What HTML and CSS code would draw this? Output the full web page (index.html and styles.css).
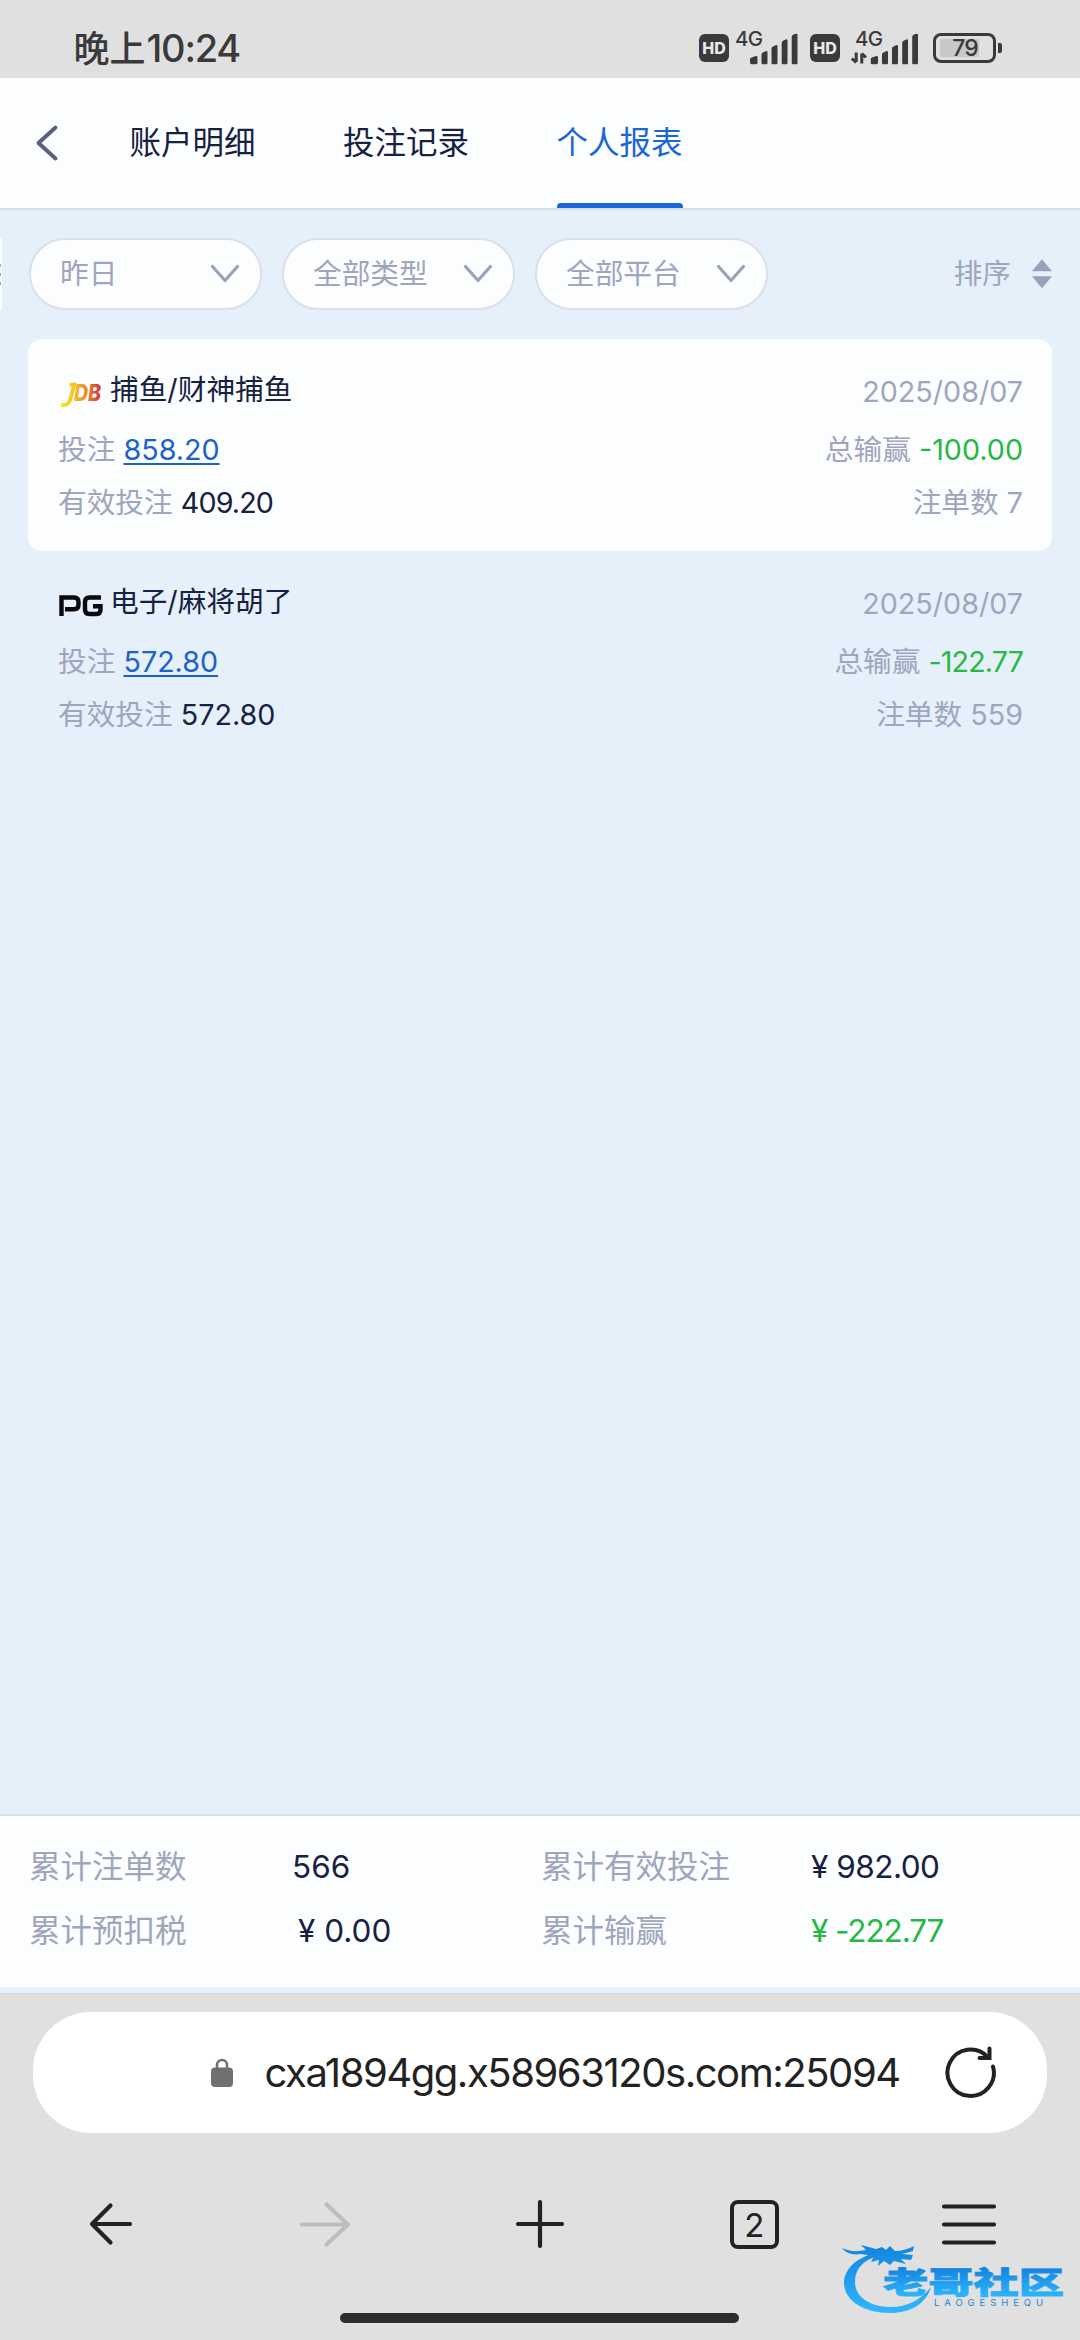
FILE: index.html
```html
<!DOCTYPE html>
<html lang="zh-CN">
<head>
<meta charset="utf-8">
<title>个人报表</title>
<link rel="stylesheet" href="styles.css">
</head>
<body>
<svg class="defs" width="0" height="0">
  <defs>
    <symbol id="bars" viewBox="0 0 48 31">
      <path d="M0 28.5V26Q0 24.500 1.500 24L5 22.700Q7.500 22 7.500 24V29Q7.500 31 5.500 31H2Q0 31 0 28.500ZM11.500 21Q11.500 19.500 13 19L15.500 17.700Q17.500 17 17.500 19V29.500Q17.500 31 16 31H13Q11.500 31 11.500 29.500ZM21.500 15Q21.500 13.500 23 13L25.500 11.700Q27.500 11 27.500 13V29.500Q27.500 31 26 31H23Q21.500 31 21.500 29.500ZM31.700 9.500Q31.700 8 33 7.300L35.700 6Q37.500 5.300 37.500 7V29.500Q37.500 31 36 31H33Q31.700 31 31.700 29.500ZM41.700 3.500Q41.700 2 43 1.300L45.700 .2Q47.500 -.3 47.500 1.500V29.500Q47.500 31 46 31H43Q41.700 31 41.700 29.500Z"/>
    </symbol>
    <symbol id="chevron" viewBox="0 0 30 20">
      <path d="M2.500 2.500L15 16.500L27.500 2.500" fill="none" stroke="#9aa1b8" stroke-width="3.200" stroke-linecap="round" stroke-linejoin="round"/>
    </symbol>
  </defs>
</svg>
<div class="screen">
  <div class="status">
    <div class="clock">晚上<span class="clock-num">10:24</span></div>
    <div class="status-icons">
      <div class="hd">HD</div>
      <svg class="signal" width="64" height="36" viewBox="0 0 64 36"><text x="0" y="17" class="net">4G</text><use href="#bars" x="15" y="4.500" width="48" height="31"/></svg>
      <div class="hd hd-second">HD</div>
      <svg class="signal signal-second" width="68" height="36" viewBox="0 0 68 36"><text x="4" y="17" class="net">4G</text><use href="#bars" x="19.500" y="4.500" width="48" height="31"/><path d="M5.200 23.500V33M5.200 33.500L.8 29.500M10.800 34.500V24.500M10.800 24.500L15 28.500" fill="none" stroke="#3a3a3a" stroke-width="3"/></svg>
      <div class="battery"><div class="battery-fill"></div><span class="battery-text">79</span></div>
      <div class="battery-nub"></div>
    </div>
  </div>

  <div class="header">
    <svg class="back" width="24" height="38" viewBox="0 0 24 38"><path d="M20.500 3.500L3.500 19L20.500 34.500" fill="none" stroke="#59627d" stroke-width="4" stroke-linecap="round" stroke-linejoin="round"/></svg>
    <div class="tabs">
      <div class="tab">账户明细</div>
      <div class="tab">投注记录</div>
      <div class="tab tab-active">个人报表</div>
    </div>
  </div>

  <div class="content">
    <div class="filters">
      <div class="edge"><i></i><i></i><i></i></div>
      <div class="pill"><span>昨日</span><svg width="30" height="20"><use href="#chevron"/></svg></div>
      <div class="pill"><span>全部类型</span><svg width="30" height="20"><use href="#chevron"/></svg></div>
      <div class="pill"><span>全部平台</span><svg width="30" height="20"><use href="#chevron"/></svg></div>
      <div class="sort"><span>排序</span><svg width="20" height="30" viewBox="0 0 20 30"><path d="M0 12.300L10 .3L20 12.300ZM0 17.300H20L10 29.300Z" fill="#98a1bb"/></svg></div>
    </div>

    <div class="card card-white">
      <div class="row row-title">
        <div class="game">
          <svg class="logo" width="48" height="30" viewBox="0 0 48 30">
            <defs><linearGradient id="jdb" gradientUnits="userSpaceOnUse" x1="4" y1="0" x2="43" y2="0"><stop offset="0" stop-color="#f8e52c"/><stop offset=".3" stop-color="#f3c327"/><stop offset=".65" stop-color="#e98626"/><stop offset="1" stop-color="#d0323a"/></linearGradient></defs>
            <path d="M11.500 5.700H16.200L12 21Q10.500 26 5.500 26H3" fill="none" stroke="url(#jdb)" stroke-width="3.800"/>
            <text x="16" y="21.500" class="jdb" textLength="27" lengthAdjust="spacingAndGlyphs">DB</text>
          </svg><span>捕鱼/财神捕鱼</span>
        </div>
        <span class="date">2025/08/07</span>
      </div>
      <div class="row row-bet">
        <div>投注 <a class="amount">858.20</a></div>
        <div>总输赢 <span class="loss">-100.00</span></div>
      </div>
      <div class="row row-valid">
        <div>有效投注 <span class="dark tight">409.20</span></div>
        <div>注单数 7</div>
      </div>
    </div>

    <div class="card">
      <div class="row row-title">
        <div class="game">
          <svg class="logo" width="48" height="30" viewBox="0 0 48 30"><path d="M3.500 25V6.500H16Q20.500 6.500 20.500 11V13.500Q20.500 18.200 16 18.200H7M43 6.500H31.500Q27 6.500 27 11V18.500Q27 23 31.500 23H38.500Q42.500 23 42.500 18.500V15.300H35" fill="none" stroke="#090a0e" stroke-width="4.400"/></svg><span>电子/麻将胡了</span>
        </div>
        <span class="date">2025/08/07</span>
      </div>
      <div class="row row-bet">
        <div>投注 <a class="amount">572.80</a></div>
        <div>总输赢 <span class="loss tight">-122.77</span></div>
      </div>
      <div class="row row-valid">
        <div>有效投注 <span class="dark">572.80</span></div>
        <div>注单数 559</div>
      </div>
    </div>
  </div>

  <div class="summary">
    <div>累计注单数</div><div class="dark">566</div>
    <div>累计有效投注</div><div class="dark yen">¥ 982.00</div>
    <div>累计预扣税</div><div class="dark indent">¥ 0.00</div>
    <div>累计输赢</div><div class="loss yen tight">¥ -222.77</div>
  </div>

  <div class="browser">
    <div class="urlbar">
      <svg class="lock" width="24" height="30" viewBox="0 0 24 30"><path d="M7 11V7A5 5 0 0 1 17 7V11" fill="none" stroke="#707070" stroke-width="2.500"/><rect x="1" y="9.500" width="22" height="19.500" rx="4" fill="#707070"/></svg>
      <span class="url">cxa1894gg.x58963120s.com:25094</span>
      <svg class="reload" width="54" height="54" viewBox="0 0 54 54"><path d="M50 22.500A23.200 23.200 0 1 1 44.500 12.800" fill="none" stroke="#222" stroke-width="4" stroke-linecap="round"/><path d="M46.500 4.500V14H36.500" fill="none" stroke="#222" stroke-width="4" stroke-linecap="round"/></svg>
    </div>
    <div class="nav">
      <svg width="56" height="56" viewBox="0 0 56 56" fill="none" stroke="#222" stroke-width="4.200" stroke-linecap="round" stroke-linejoin="round"><path d="M28.500 9.500L10 28L28.500 46.500M11 28H48"/></svg>
      <svg width="56" height="56" viewBox="0 0 56 56" fill="none" stroke="#bdbdbd" stroke-width="4.200" stroke-linecap="round" stroke-linejoin="round"><path d="M29.500 8.500L51 28.500L29.500 48.500M5 28.500H50"/></svg>
      <svg width="56" height="56" viewBox="0 0 56 56" fill="none" stroke="#222" stroke-width="4.200" stroke-linecap="round"><path d="M28 6V50M6 28H50"/></svg>
      <div class="tabcount">2</div>
      <svg width="56" height="56" viewBox="0 0 56 56" fill="none" stroke="#222" stroke-width="4.200" stroke-linecap="round"><path d="M3 10.500H53M3 28.500H53M3 46.500H53"/></svg>
    </div>
    <div class="handle"></div>
  </div>

  <svg class="watermark" width="240" height="84" viewBox="0 0 240 84">
    <defs><linearGradient id="wm" gradientUnits="userSpaceOnUse" x1="0" y1="8" x2="0" y2="76"><stop offset="0" stop-color="#1183dc"/><stop offset="1" stop-color="#2fb6ff"/></linearGradient>
    <linearGradient id="wt" gradientUnits="userSpaceOnUse" x1="0" y1="28" x2="0" y2="58"><stop offset="0" stop-color="#0f7ddd"/><stop offset="1" stop-color="#29b2fa"/></linearGradient></defs>
    <g fill="url(#wm)">
      <path d="M36 17C17 21 4 33 4 47C4 64 23 77 50 77C70 77 86 68 91 51C81 64 67 71 51 71C30 71 15 61 15 46C15 33 23 24 38 20Z"/>
      <path d="M2 12Q12 17 26 14L21 9L36 13L42 11L46 14L50 10L55 15Q65 15 74 10L73 15L62 18L73 19L71 24L61 23L66 28L54 25L50 29L44 25L38 30L39 24L31 26L34 20L21 18Q8 20 2 12Z"/>
    </g>
    <text x="43" y="57" class="wm-name" textLength="181" lengthAdjust="spacingAndGlyphs">老哥社区</text>
    <text x="94" y="69.500" class="wm-latin" textLength="109">LAOGESHEQU</text>
  </svg>
</div>
</body>
</html>
```
FILE: styles.css
```css
* { box-sizing: border-box; }
body { margin: 0; font-family: Inter, "Noto Sans CJK SC", sans-serif; }
.defs { position: absolute; }
.screen {
  position: relative;
  width: 1080px;
  height: 2340px;
  overflow: hidden;
  display: flex;
  flex-direction: column;
  background: #e6f0fb;
}

/* status bar */
.status {
  height: 78px;
  flex: none;
  background: #e0e0e0;
  display: flex;
  justify-content: space-between;
  padding: 0 78px 0 73.500px;
  color: #3a3a3a;
}
.clock { font-size: 36px; font-weight: 500; line-height: 50px; padding-top: 22.500px; white-space: nowrap; }
.clock-num { font-size: 38px; letter-spacing: -1.2px; margin-left: 1px; }
.status-icons { display: flex; align-items: flex-start; padding-top: 33px; }
.hd {
  width: 30px;
  height: 28px;
  margin-top: 1px;
  border-radius: 6px;
  background: #3a3a3a;
  color: #e8e8e8;
  font-size: 16px;
  font-weight: 800;
  line-height: 28px;
  text-align: center;
}
.signal { margin: -4px 0 0 6px; fill: #3a3a3a; overflow: visible; }
.net { font-size: 20.500px; font-weight: 450; letter-spacing: -.8px; fill: #3a3a3a; }
.hd-second { margin-left: 11px; }
.signal-second { margin-left: 11px; }
.battery {
  position: relative;
  width: 63px;
  height: 30px;
  margin-left: 14px;
  border: 3px solid #3a3a3a;
  border-radius: 8px;
  text-align: center;
}
.battery-fill { position: absolute; left: 4px; top: 3px; width: 39px; height: 18px; background: #c8c8c8; border-radius: 2px; }
.battery-text { position: relative; display: block; margin-left: 1px; font-size: 23px; font-weight: 500; line-height: 24px; letter-spacing: -1px; }
.battery-nub { width: 4px; height: 10px; margin: 10px 0 0 2px; background: #3a3a3a; border-radius: 0 2px 2px 0; }

/* header */
.header {
  height: 132px;
  flex: none;
  background: #fcfdff;
  border-bottom: 2px solid #d7deeb;
  display: flex;
  align-items: flex-start;
  padding-left: 35px;
}
.back { margin-top: 46px; flex: none; }
.tabs { display: flex; gap: 87.500px; margin-left: 70.500px; }
.tab {
  height: 130px;
  line-height: 129px;
  font-size: 31.500px;
  color: #16223f;
  position: relative;
  white-space: nowrap;
}
.tab-active { color: #1a66d2; }
.tab-active::after {
  content: "";
  position: absolute;
  left: 0;
  right: 0;
  bottom: 0;
  height: 5px;
  background: #1a66dd;
  border-radius: 4px 4px 0 0;
}

/* filters */
.content { flex: 1; padding: 28px 28px 0; color: #9ea6bd; font-size: 28.700px; }
.filters { position: relative; display: flex; gap: 20px; margin-left: 1px; height: 72px; }
.edge { position: absolute; left: -29px; top: 0; width: 2px; height: 72px; background: #fcfdff; padding-top: 26px; }
.edge i { display: block; width: 1px; height: 3px; background: #9ea6bd; margin-bottom: 6px; }
.pill {
  width: 233px;
  height: 72px;
  border: 2px solid #d9dfeb;
  border-radius: 36px;
  background: #fcfdff;
  display: flex;
  align-items: center;
  justify-content: space-between;
  padding: 0 20px 0 29px;
  line-height: 66px;
}
.sort { margin-left: auto; display: flex; align-items: center; gap: 21px; line-height: 70px; }

/* cards */
.card { height: 212px; padding: 21px 29px 0 30px; border-radius: 14px; white-space: nowrap; }
.card-white { margin-top: 28.500px; background: #fcfdff; }
.row { display: flex; justify-content: space-between; }
.row-title { height: 60px; line-height: 59px; }
.row-bet { height: 60px; line-height: 60px; }
.row-valid { height: 46px; line-height: 46px; }
.game { display: flex; color: #16223f; }
.logo { margin: 19.500px 4px 0 0; }
.jdb { font-size: 23px; font-weight: 800; font-style: italic; fill: url(#jdb); }
.date { margin-top: 2px; }
.amount { color: #1b63c8; text-decoration: underline; text-decoration-thickness: 2px; text-underline-offset: 3px; }
.dark { color: #16223f; }
.loss { color: #26b843; }
.tight { letter-spacing: -.9px; }

/* totals */
.summary {
  height: 173px;
  flex: none;
  margin-bottom: 6px;
  background: #fcfdff;
  border-top: 2px solid #d9dfe8;
  padding: 18px 29px 0;
  display: grid;
  grid-template-columns: 263px 249px 270px 1fr;
  grid-auto-rows: 64px;
  line-height: 65px;
  font-size: 31.500px;
  color: #9ea6bd;
  white-space: nowrap;
}
.yen { letter-spacing: -.5px; }
.yen.tight { letter-spacing: -1.1px; }
.indent { padding-left: 6px; }

/* browser chrome */
.browser { height: 347px; flex: none; background: #e0e0e0; border-top: 1px solid #d5dade; padding: 18px 33px 0; }
.urlbar { height: 121px; border-radius: 58px; background: #fff; display: flex; align-items: center; padding-left: 177px; }
.url { width: 631px; margin-left: 30.500px; font-size: 40px; color: #222; line-height: 121px; white-space: nowrap; letter-spacing: -1.450px; }
.reload { margin: -3px 0 0 47px; }
.nav { display: flex; justify-content: space-between; align-items: center; height: 56px; margin: 63px 50px 0 49px; }
.tabcount { width: 49px; height: 49px; margin: 0 3.500px; border: 4px solid #222; border-radius: 8px; font-size: 33px; line-height: 42px; text-align: center; color: #222; }
.handle { width: 399px; height: 10px; margin: 61px 0 0 307px; border-radius: 5px; background: #2e2e2e; }

.watermark { position: absolute; left: 840px; top: 2236px; }
.wm-name { font-family: "Noto Sans CJK SC", sans-serif; font-size: 30px; font-weight: 900; fill: url(#wt); stroke: url(#wt); stroke-width: .8; }
.wm-latin { font-size: 9.500px; fill: #2389cc; }
```
